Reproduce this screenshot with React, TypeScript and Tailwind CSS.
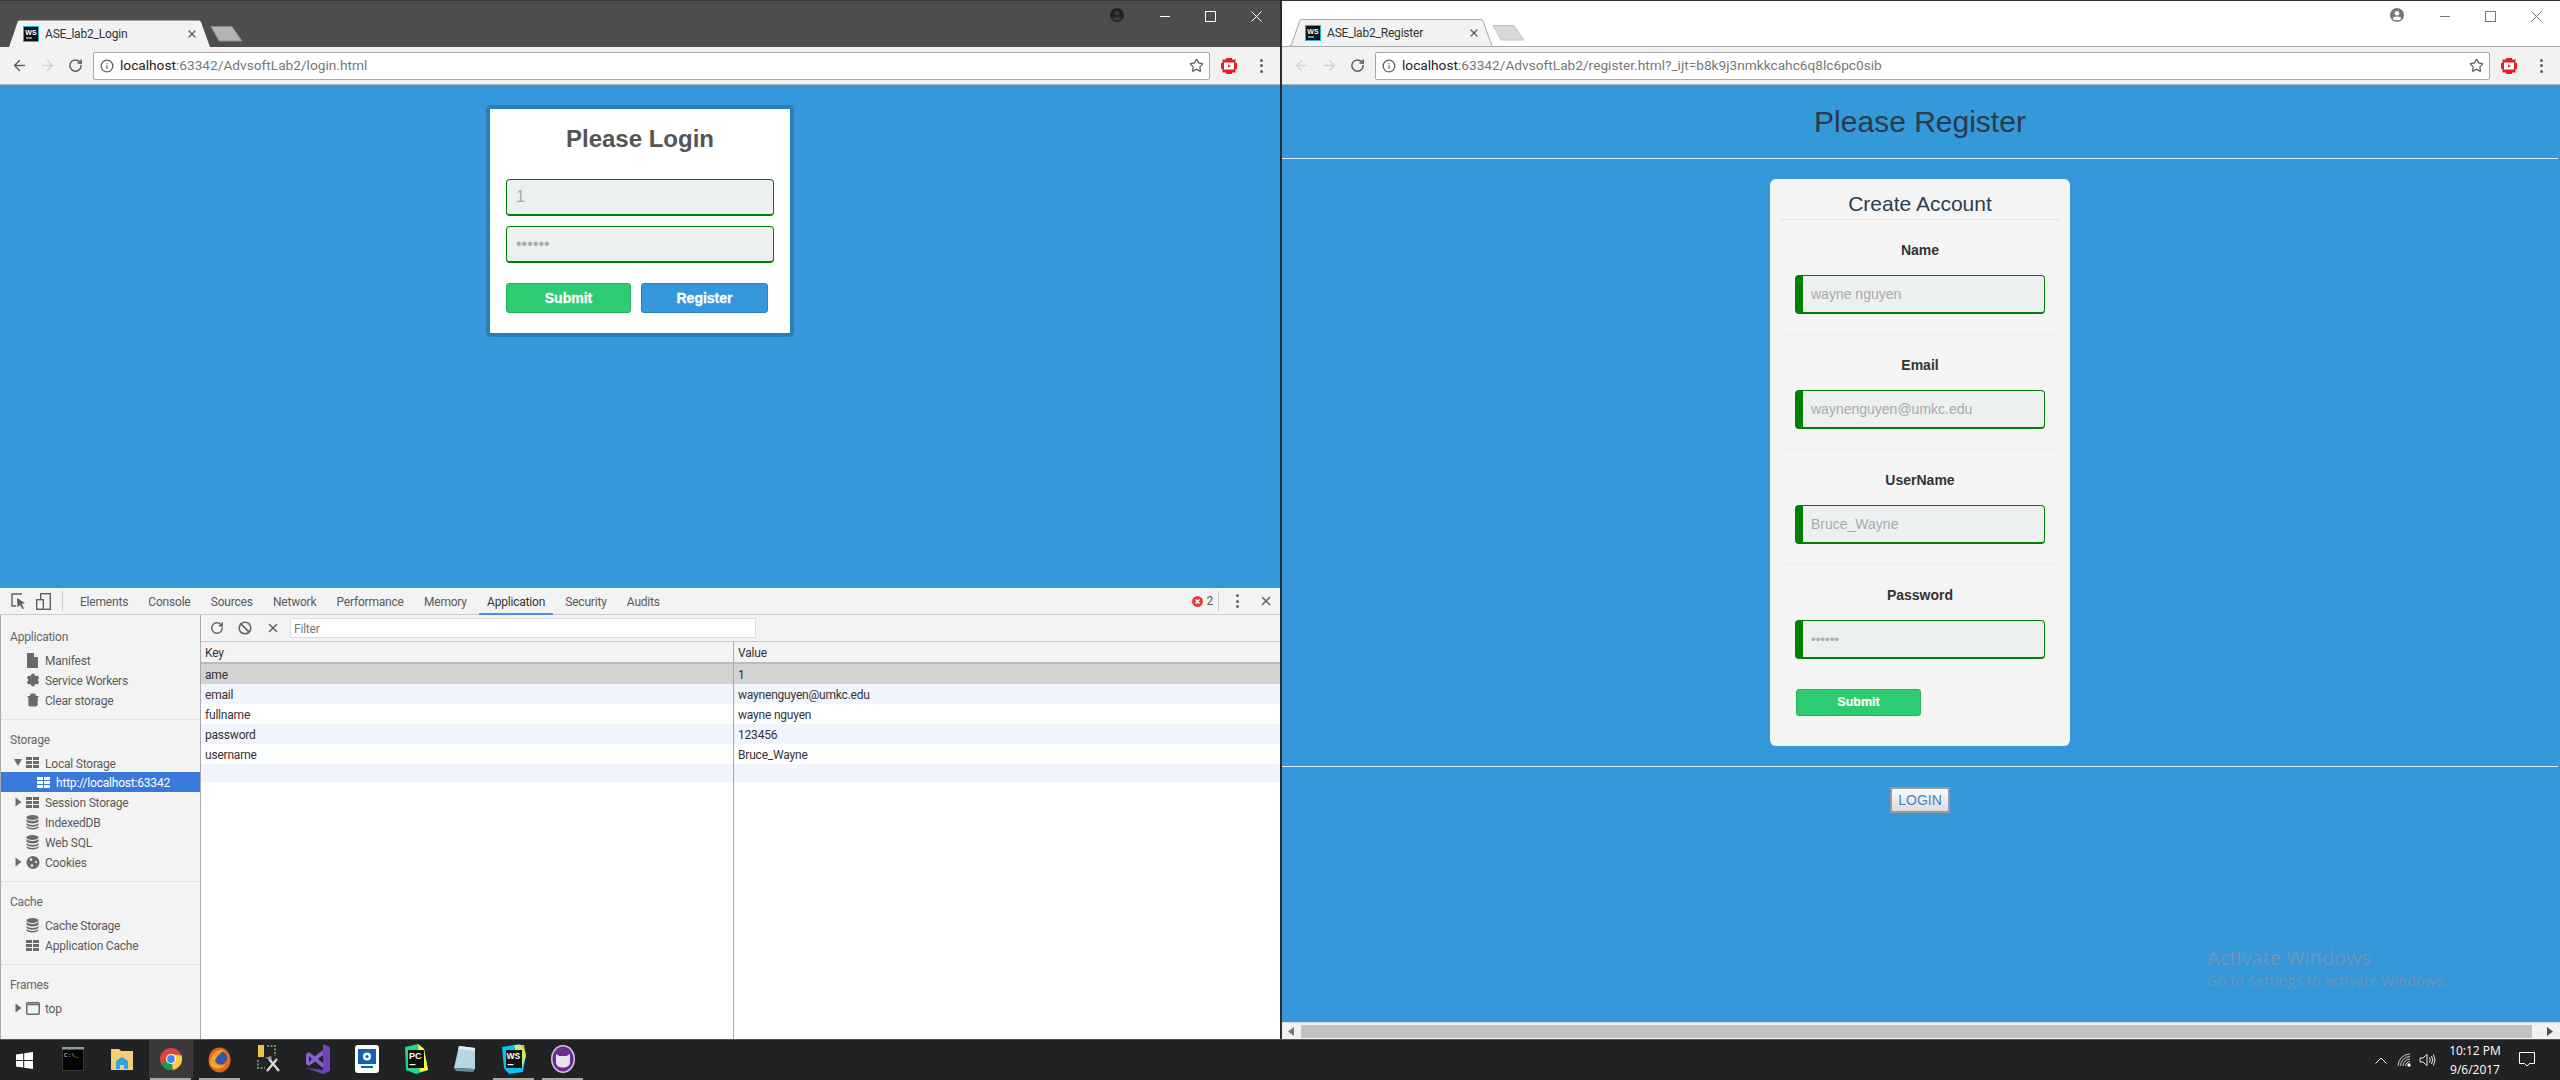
import { ArrowLeft, ArrowRight, Ban, Info, RotateCw, Settings, Star, Trash2, X } from "lucide-react";
import React from "react";

function Favicon() {
  return (
    <svg width="16" height="16" viewBox="0 0 16 16" className="shrink-0">
      <rect x="0.5" y="0.5" width="15" height="15" fill="#111" stroke="#18b5de" />
      <text x="8" y="8.5" textAnchor="middle" fontSize="7" fontWeight="700" fill="#fff" fontFamily="Liberation Sans">WS</text>
      <rect x="3" y="11.5" width="6" height="1" fill="#fff" />
    </svg>
  );
}

function Tab({ title, dark }: { title: string; dark?: boolean }) {
  return (
    <div className="flex items-end pl-[7px]">
      <div className="relative h-[27px] w-[204px]">
        <svg width="204" height="27" className="absolute left-0 top-0">
          <path
            d="M0 27 L2 27 L11 1 Q11.5 0.5 13 0.5 L192 0.5 Q193.5 0.5 194 2 L203 27"
            fill="#f2f2f2"
            stroke={dark ? "none" : "#aaa"}
          />
        </svg>
        <div className="relative flex h-full items-center pl-[16px] pr-[13px]">
          <Favicon />
          <span className="ml-[6px] grow text-[12px] tracking-[-0.2px] text-[#333]">{title}</span>
          <X size={12} strokeWidth={2.4} className="text-[#5a5a5a]" />
        </div>
      </div>
      <svg width="34" height="16" className="mb-[5px] -ml-[1px]">
        <path
          d="M1 0.5 L22 0.5 L32 15 L9 15 Z"
          fill={dark ? "#b4b4b4" : "#d9d9d9"}
          stroke={dark ? "#8a8a8a" : "#c4c4c4"}
        />
      </svg>
    </div>
  );
}

function Avatar({ color }: { color: string }) {
  return (
    <svg width="14" height="14" viewBox="0 0 14 14">
      <circle cx="7" cy="7" r="7" fill={color} />
      <circle cx="7" cy="5.2" r="2.3" fill="#fff" fillOpacity={color === "#777" ? 1 : 0.12} />
      <ellipse cx="7" cy="10.4" rx="4" ry="1.9" fill="#fff" fillOpacity={color === "#777" ? 1 : 0.12} />
    </svg>
  );
}

function WindowButtons({ color }: { color: string }) {
  return (
    <div className="flex h-[30px] items-center">
      <svg width="10" height="10" className="mr-[35px]">
        <path d="M0 5.5 H10" stroke={color} />
      </svg>
      <svg width="11" height="11" className="mr-[35px]">
        <rect x="0.5" y="0.5" width="10" height="10" fill="none" stroke={color} />
      </svg>
      <svg width="11" height="11" className="mr-[18px]">
        <path d="M0.5 0.5 L10.5 10.5 M10.5 0.5 L0.5 10.5" stroke={color} />
      </svg>
    </div>
  );
}

function Extension() {
  return (
    <svg width="16" height="16" viewBox="0 0 16 16">
      <path d="M5 0 H11 V1.5 H14.5 V5 H16 V11 H14.5 V14.5 H11 V16 H5 V14.5 H1.5 V11 H0 V5 H1.5 V1.5 H5 Z" fill="#dc2126" />
      <rect x="3" y="4.5" width="10" height="7" fill="#fff" />
      <path d="M7 6.5 L10 8 L7 9.5 Z" fill="#dc2126" />
    </svg>
  );
}

function Dots({ color = "#5f5f5f" }: { color?: string }) {
  return (
    <div className="flex flex-col gap-[2.5px]">
      <span className="h-[3px] w-[3px] rounded-full" style={{ background: color }} />
      <span className="h-[3px] w-[3px] rounded-full" style={{ background: color }} />
      <span className="h-[3px] w-[3px] rounded-full" style={{ background: color }} />
    </div>
  );
}

function Toolbar({ host, path, backOff }: { host: string; path: string; backOff?: boolean }) {
  return (
    <div className="flex h-[38px] items-center border-b border-[#b5b5b5] bg-[#f2f2f2]">
      <div className="flex w-[93px] items-center pl-[11px]">
        <ArrowLeft size={17} strokeWidth={2} className={backOff ? "text-[#d4d4d4]" : "text-[#5f5f5f]"} />
        <ArrowRight size={17} strokeWidth={2} className="ml-[11px] text-[#d4d4d4]" />
        <RotateCw size={15} strokeWidth={2.4} className="ml-[12px] text-[#5f5f5f]" />
      </div>
      <div className="flex h-[28px] grow items-center rounded-[2px] border border-[#a9a9a9] bg-white pl-[6px] pr-[5px]">
        <Info size={14} strokeWidth={2.2} className="text-[#5f5f5f]" />
        <span className="ml-[6px] grow text-[13.7px] text-[#777]">
          <span className="text-[#222]">{host}</span>
          {path}
        </span>
        <Star size={15} strokeWidth={2} className="text-[#5f5f5f]" />
      </div>
      <div className="ml-[11px] flex w-[59px] items-center">
        <Extension />
        <div className="ml-[23px]">
          <Dots />
        </div>
      </div>
    </div>
  );
}

const inputBase =
  "box-border block rounded-[4px] border border-b-2 border-[#008000] bg-[#ecf0f1] text-[#aaa] outline-none";

function LoginPage() {
  return (
    <div className="flex h-[503px] flex-col items-center bg-[#3498db] pt-[20px]">
      <div className="box-border h-[232px] w-[308px] rounded-[5px] border-4 border-[#2980b9] bg-white px-[16px]">
        <h2 className="mt-[15px] text-center text-[24px] font-bold leading-[30px] text-[#555] font-['Liberation_Sans',sans-serif]">
          Please Login
        </h2>
        <input readOnly value="1" className={`${inputBase} mt-[25px] h-[37px] w-[268px] px-[9px] text-[16px] font-['Liberation_Sans',sans-serif]`} />
        <input readOnly type="password" value="123456" className={`${inputBase} mt-[10px] h-[37px] w-[268px] px-[9px] text-[16px] font-['Liberation_Sans',sans-serif]`} />
        <div className="mt-[20px] flex gap-[10px] font-['Liberation_Sans',sans-serif]">
          <button className="h-[30px] w-[125px] rounded-[3px] border border-[#27ae60] bg-[#2ecc71] text-[14px] font-bold text-white [-webkit-text-stroke:0.3px_white]">
            Submit
          </button>
          <button className="h-[30px] w-[127px] rounded-[3px] border border-[#2980b9] bg-[#3498db] text-[14px] font-bold text-white [-webkit-text-stroke:0.3px_white]">
            Register
          </button>
        </div>
      </div>
    </div>
  );
}

function GridIcon({ color = "#6a6a6a" }: { color?: string }) {
  return (
    <svg width="13" height="11" viewBox="0 0 13 11" className="shrink-0">
      <path d="M0 0 H6 V3 H0 Z M7 0 H13 V3 H7 Z M0 4 H6 V7 H0 Z M7 4 H13 V7 H7 Z M0 8 H6 V11 H0 Z M7 8 H13 V11 H7 Z" fill={color} />
    </svg>
  );
}

function DbIcon() {
  return (
    <svg width="13" height="15" viewBox="0 0 13 15" className="shrink-0">
      <ellipse cx="6.5" cy="2.5" rx="6" ry="2.5" fill="#6a6a6a" />
      <path d="M0.5 4 C2 6.5 11 6.5 12.5 4 V6.5 C11 9 2 9 0.5 6.5 Z M0.5 8 C2 10.5 11 10.5 12.5 8 V9.8 C11 12.3 2 12.3 0.5 9.8 Z M0.5 11 C2 13.5 11 13.5 12.5 11 V12.5 C11 15 2 15 0.5 12.5 Z" fill="#6a6a6a" />
    </svg>
  );
}

function FileIcon() {
  return (
    <svg width="11" height="15" viewBox="0 0 11 15" className="ml-[1px] mr-[1px] shrink-0">
      <path d="M0 0 H6.5 L11 4.5 V15 H0 Z" fill="#6a6a6a" />
      <path d="M7 0.5 V4 H10.5" fill="#f3f3f3" />
    </svg>
  );
}

function CookieIcon() {
  return (
    <svg width="14" height="15" viewBox="0 0 14 15" className="shrink-0">
      <circle cx="7" cy="7.5" r="6.5" fill="#6a6a6a" />
      <circle cx="5" cy="4.5" r="1.2" fill="#f3f3f3" />
      <circle cx="10" cy="7" r="1.1" fill="#f3f3f3" />
      <circle cx="6" cy="10.5" r="1.2" fill="#f3f3f3" />
    </svg>
  );
}

function FrameIcon() {
  return (
    <svg width="14" height="13" viewBox="0 0 14 13" className="shrink-0">
      <rect x="0.75" y="0.75" width="12.5" height="11.5" rx="1" fill="none" stroke="#6a6a6a" strokeWidth="1.5" />
      <path d="M1 2.5 H13" stroke="#6a6a6a" strokeWidth="1.5" />
    </svg>
  );
}

function Caret() {
  return (
    <svg width="7" height="10" viewBox="0 0 7 10" className="shrink-0">
      <path d="M0.5 0.5 L6.5 5 L0.5 9.5 Z" fill="#6a6a6a" />
    </svg>
  );
}

function SideRow({ icon, label, caret }: { icon: React.ReactNode; label: string; caret?: boolean }) {
  return (
    <div className="flex h-[20px] items-center pl-[14px]">
      <div className="w-[11px]">{caret ? <Caret /> : null}</div>
      <div className="flex w-[19px] justify-start">{icon}</div>
      <span className="pt-[2px] text-[12px] text-[#5a5a5a]">{label}</span>
    </div>
  );
}

function SideTitle({ children }: { children: string }) {
  return <div className="mb-[4px] flex h-[20px] items-center pl-[9px] pt-[2px] text-[12px] text-[#666]">{children}</div>;
}

function Sidebar() {
  return (
    <div className="flex w-[201px] shrink-0 flex-col border-l border-r border-[#aaa] bg-[#f3f3f3] pt-[11px]">
      <SideTitle>Application</SideTitle>
      <SideRow icon={<FileIcon />} label="Manifest" />
      <SideRow icon={<Settings size={14} fill="#6a6a6a" strokeWidth={2.2} className="text-[#6a6a6a]" />} label="Service Workers" />
      <SideRow icon={<Trash2 size={14} fill="#6a6a6a" strokeWidth={2} className="text-[#6a6a6a]" />} label="Clear storage" />
      <div className="mb-[9px] mt-[9px] h-px bg-[#e2e2e2]" />
      <SideTitle>Storage</SideTitle>
      <div className="flex h-[19px] items-center pl-[13px]">
        <svg width="8" height="7" viewBox="0 0 8 7" className="mr-[4px]">
          <path d="M0 0 H8 L4 7 Z" fill="#6a6a6a" />
        </svg>
        <div className="w-[19px]">
          <GridIcon />
        </div>
        <span className="pt-[2px] text-[12px] text-[#5a5a5a]">Local Storage</span>
      </div>
      <div className="flex h-[20px] items-center bg-[#3879d9] pl-[36px]">
        <GridIcon color="#fff" />
        <span className="ml-[6px] pt-[2px] text-[12px] text-white">http://localhost:63342</span>
      </div>
      <SideRow icon={<GridIcon />} label="Session Storage" caret />
      <SideRow icon={<DbIcon />} label="IndexedDB" />
      <SideRow icon={<DbIcon />} label="Web SQL" />
      <SideRow icon={<CookieIcon />} label="Cookies" caret />
      <div className="mb-[9px] mt-[9px] h-px bg-[#e2e2e2]" />
      <SideTitle>Cache</SideTitle>
      <SideRow icon={<DbIcon />} label="Cache Storage" />
      <SideRow icon={<GridIcon />} label="Application Cache" />
      <div className="mb-[9px] mt-[9px] h-px bg-[#e2e2e2]" />
      <SideTitle>Frames</SideTitle>
      <SideRow icon={<FrameIcon />} label="top" caret />
    </div>
  );
}

const storageRows = [
  ["ame", "1", "bg-[#d3d3d3]"],
  ["email", "waynenguyen@umkc.edu", "bg-[#f1f5fd]"],
  ["fullname", "wayne nguyen", "bg-white"],
  ["password", "123456", "bg-[#f1f5fd]"],
  ["username", "Bruce_Wayne", "bg-white"],
  ["", "", "bg-[#f1f5fd]"],
];

function StorageTable() {
  return (
    <div className="flex min-w-0 grow flex-col bg-white">
      <div className="flex h-[27px] items-center border-b border-[#ccc] bg-[#f3f3f3] pl-[9px]">
        <RotateCw size={14} strokeWidth={2.6} className="text-[#666]" />
        <Ban size={14} strokeWidth={2.6} className="ml-[14px] text-[#666]" />
        <X size={14} strokeWidth={2.6} className="ml-[14px] text-[#666]" />
        <div className="ml-[10px] flex h-[20px] w-[466px] items-center border border-[#ddd] bg-white pl-[3px] pt-[1px] text-[12px] text-[#777]">
          Filter
        </div>
      </div>
      <div className="flex h-[22px] items-center border-b-2 border-[#bbb] bg-[#f3f3f3] text-[12px] text-[#333]">
        <div className="flex h-full w-[533px] items-center border-r border-[#aaa] pl-[4px] pt-[2px]">Key</div>
        <div className="pl-[4px] pt-[2px]">Value</div>
      </div>
      {storageRows.map(([k, v, bg], i) => (
        <div key={i} className={`flex text-[12px] text-[#333] ${i === 5 ? "h-[18px]" : "h-[20px]"} ${bg}`}>
          <div className="flex h-full w-[533px] items-center border-r border-[#aaa] pl-[4px] pt-[2px]">{k}</div>
          <div className="flex items-center pl-[4px] pt-[2px]">{v}</div>
        </div>
      ))}
      <div className="w-[533px] grow border-r border-[#aaa]" />
    </div>
  );
}

function Devtools() {
  const tabs = ["Elements", "Console", "Sources", "Network", "Performance", "Memory", "Application", "Security", "Audits"];
  return (
    <div className="flex h-[451px] flex-col bg-white tracking-[-0.2px] font-['Roboto',sans-serif]">
      <div className="flex h-[27px] items-center border-b border-[#ccc] bg-[#f3f3f3] pl-[11px]">
        <svg width="15" height="17" viewBox="0 0 15 17" fill="none" className="mr-[10px]">
          <path d="M11 1 H1 V13 H5" stroke="#5f5f5f" strokeWidth="1.4" />
          <path d="M6 5 L14 10 L10.5 11 L13 15.5 L11.5 16 L9 12 L6.5 14.5 Z" fill="#5f5f5f" />
        </svg>
        <svg width="15" height="17" viewBox="0 0 15 17" fill="none">
          <rect x="4.7" y="0.7" width="9.6" height="15.6" stroke="#5f5f5f" strokeWidth="1.4" />
          <rect x="0.7" y="6.7" width="6.6" height="9.6" fill="#f3f3f3" stroke="#5f5f5f" strokeWidth="1.4" />
        </svg>
        <div className="ml-[11px] mr-[17px] h-[20px] w-px bg-[#ccc]" />
        <div className="flex h-full grow gap-[20.2px] pt-[2px] text-[12px] text-[#5a5a5a]">
          {tabs.map((t) => (
            <div
              key={t}
              className={
                t === "Application"
                  ? "-mx-[8px] -mt-[2px] flex h-[27px] items-center border-b-2 border-[#4a8fe8] px-[8px] pt-[2px] text-[#333]"
                  : "flex h-full items-center"
              }
            >
              {t}
            </div>
          ))}
        </div>
        <svg width="11" height="11" viewBox="0 0 11 11">
          <circle cx="5.5" cy="5.5" r="5.5" fill="#e53d3d" />
          <path d="M3.5 3.5 L7.5 7.5 M7.5 3.5 L3.5 7.5" stroke="#fff" strokeWidth="1.3" />
        </svg>
        <span className="ml-[3px] text-[12px] text-[#5a5a5a]">2</span>
        <div className="ml-[5px] mr-[17px] h-[20px] w-px bg-[#ccc]" />
        <Dots color="#666" />
        <X size={14} strokeWidth={2.6} className="ml-[20px] mr-[7px] text-[#666]" />
      </div>
      <div className="flex min-h-0 grow">
        <Sidebar />
        <StorageTable />
      </div>
    </div>
  );
}

function Field({ label, value, password, last }: { label: string; value: string; password?: boolean; last?: boolean }) {
  return (
    <div className={`mx-[10px] px-[15px] pt-[20px] ${last ? "" : "border-b border-[#eee] pb-[20px]"}`}>
      <div className="text-center text-[14px] font-bold leading-[20px] text-[#333]">{label}</div>
      <input
        readOnly
        type={password ? "password" : "text"}
        value={value}
        className={`${inputBase} mt-[15px] h-[39px] w-[250px] border-l-8 pl-[8px] ${password ? "text-[13.33px]" : "text-[14px]"} font-['Liberation_Sans',sans-serif]`}
      />
    </div>
  );
}

function RegisterPage() {
  return (
    <div className="relative flex grow flex-col bg-[#3498db] pr-[2px] font-['Liberation_Sans',sans-serif]">
      <div className="flex h-[74px] items-center justify-center border-b border-[#dbe9f4] text-[30px] text-[#2b3a48]">
        Please Register
      </div>
      <div className="mt-[20px] flex flex-col items-center">
        <div className="h-[567px] w-[300px] rounded-[6px] bg-[#f5f5f5]">
          <div className="mx-[10px] flex h-[41px] items-center justify-center border-b border-[#e5e5e5] pt-[9px] text-[21px] text-[#2c3e50]">
            Create Account
          </div>
          <Field label="Name" value="wayne nguyen" />
          <Field label="Email" value="waynenguyen@umkc.edu" />
          <Field label="UserName" value="Bruce_Wayne" />
          <Field label="Password" value="123456" password last />
          <button className="ml-[26px] mt-[30px] h-[27px] w-[125px] rounded-[3px] border border-[#27ae60] bg-[#2ecc71] text-[12.5px] font-bold text-white [-webkit-text-stroke:0.2px_white]">
            Submit
          </button>
        </div>
      </div>
      <div className="mt-[20px] h-px bg-[#dbe9f4]" />
      <div className="mt-[20px] flex justify-center">
        <button className="h-[26px] w-[60px] border-2 border-[#999] bg-linear-to-b from-[#fafafa] to-[#dcdcdc] text-[14px] text-[#3a86c8]">
          LOGIN
        </button>
      </div>
      <div className="absolute left-[925px] top-[860px] font-['Open_Sans',sans-serif] text-[#6d96b8]">
        <div className="text-[20px] leading-[26px]">Activate Windows</div>
        <div className="text-[14px] leading-[20px] tracking-[0.3px]">Go to Settings to activate Windows.</div>
      </div>
    </div>
  );
}

function ScrollBar() {
  return (
    <div className="flex h-[17px] items-center border-t border-[#ddd] bg-[#f1f1f1] px-[6px]">
      <svg width="6" height="9">
        <path d="M6 0 L0 4.5 L6 9 Z" fill="#777" />
      </svg>
      <div className="ml-[7px] h-[13px] w-[1231px] bg-[#c1c1c1]" />
      <svg width="6" height="9" className="ml-auto mr-[1px]">
        <path d="M0 0 L6 4.5 L0 9 Z" fill="#505050" />
      </svg>
    </div>
  );
}

function TaskIcon({ children, active, open }: { children: React.ReactNode; active?: boolean; open?: boolean }) {
  return (
    <div className="flex h-full w-[49px] shrink-0 flex-col items-center">
      <div className={`flex w-[44px] grow items-center justify-center ${active ? "bg-[#3a3a3a]" : ""}`}>{children}</div>
      <div className={`h-[2px] w-[41px] ${open ? "bg-[#a8a8a8]" : ""}`} />
    </div>
  );
}

function Taskbar() {
  return (
    <div className="flex h-[41px] items-stretch border-t border-[#555] bg-[#212224]">
      <div className="flex w-[48px] shrink-0 items-center justify-center">
        <svg width="17" height="17" viewBox="0 0 17 17">
          <path d="M0 2.4 L7.2 1.4 V8 H0 Z M8.2 1.2 L17 0 V8 H8.2 Z M0 9 H7.2 V15.6 L0 14.6 Z M8.2 9 H17 V17 L8.2 15.8 Z" fill="#fff" />
        </svg>
      </div>
      <TaskIcon>
        <svg width="22" height="24" viewBox="0 0 22 24">
          <rect width="22" height="24" fill="#050505" stroke="#666" />
          <rect width="22" height="2.5" fill="#999" />
          <text x="2" y="10" fontSize="6" fill="#ddd" fontFamily="Liberation Mono">C:\_</text>
        </svg>
      </TaskIcon>
      <TaskIcon>
        <svg width="22" height="22" viewBox="0 0 22 22">
          <path d="M0 1 H8 L10 3 H22 V22 H0 Z" fill="#f4cf70" />
          <path d="M5 21 V13 L11 9 L17 13 V21 H13 V17 H9 V21 Z" fill="#2fa3e6" />
        </svg>
      </TaskIcon>
      <TaskIcon active open>
        <svg width="22" height="26" viewBox="0 0 22 22">
          <circle cx="11" cy="11" r="11" fill="#db4437" />
          <path d="M11 11 L1.5 16.5 A11 11 0 0 0 13 21.8 Z" fill="#0f9d58" />
          <path d="M11 11 L13 21.8 A11 11 0 0 0 21.5 7.5 L11 6 Z" fill="#ffcd40" />
          <circle cx="11" cy="11" r="5" fill="#fff" />
          <circle cx="11" cy="11" r="3.9" fill="#4285f4" />
        </svg>
      </TaskIcon>
      <TaskIcon open>
        <svg width="23" height="27" viewBox="0 0 23 27">
          <ellipse cx="11.5" cy="14" rx="11" ry="12.5" fill="#e8651f" />
          <circle cx="12.5" cy="12" r="6.5" fill="#3257a8" />
          <path d="M2 18 C6 24 14 24 18 18 C14 20 9 20 7 15 C9 9 13 7 16 4 C10 3 3 7 2 18 Z" fill="#f5a623" />
        </svg>
      </TaskIcon>
      <TaskIcon>
        <svg width="24" height="30" viewBox="0 0 24 30">
          <rect x="1" y="1" width="6" height="12" fill="#e9c44c" />
          <path d="M10 2 H18 V12 M1 16 V24 H8" fill="none" stroke="#7cb66c" strokeWidth="1.5" strokeDasharray="2 1.5" />
          <path d="M10 27 L20 15 M22 27 L12 15" stroke="#ddd" strokeWidth="2.2" />
          <path d="M8 14 L14 12 L15 16 Z" fill="#999" />
        </svg>
      </TaskIcon>
      <TaskIcon>
        <svg width="24" height="30" viewBox="0 0 24 30">
          <path d="M17 0 L24 3 V27 L17 30 L0 24 L17 26 Z" fill="#6d44ba" />
          <path d="M0 10 L3 8 L17 19 V24 L9 17.5 L3 22 L0 20 Z M17 6 V11 L9 17 L6 14.5 Z M3 12 V18 L6 15 Z" fill="#8a5fd0" />
        </svg>
      </TaskIcon>
      <TaskIcon>
        <svg width="24" height="30" viewBox="0 0 24 30">
          <rect y="1" width="24" height="28" rx="3" fill="#fff" />
          <rect x="3" y="5" width="18" height="15" fill="#0f62b8" />
          <rect x="6" y="22" width="12" height="2" fill="#0f62b8" />
          <circle cx="12" cy="12.5" r="4" fill="#fff" />
          <circle cx="12" cy="12.5" r="1.6" fill="#0f62b8" />
        </svg>
      </TaskIcon>
      <TaskIcon>
        <svg width="24" height="30" viewBox="0 0 24 30">
          <path d="M1 3 L14 0 L20 5 L24 26 L12 30 L2 26 Z" fill="#21d789" />
          <path d="M14 0 L20 5 L24 26 L16 28 Z" fill="#fcf84a" />
          <rect x="4" y="6" width="16" height="18" fill="#111" />
          <text x="5" y="15" fontSize="9" fontWeight="700" fill="#fff" fontFamily="Liberation Sans">PC</text>
          <rect x="5.5" y="20" width="6" height="1.2" fill="#fff" />
        </svg>
      </TaskIcon>
      <TaskIcon>
        <svg width="24" height="28" viewBox="0 0 24 28">
          <path d="M6 1 L22 3 L22 24 L1 23 Z" fill="#b4d7e3" />
          <path d="M6 1 L22 3 L22 6 L5 4 Z" fill="#dfeff5" />
          <path d="M1 23 L22 24 L20 27 L3 26 Z" fill="#6d8892" />
        </svg>
      </TaskIcon>
      <TaskIcon open>
        <svg width="24" height="30" viewBox="0 0 24 30">
          <path d="M0 3 L18 0 L24 10 L21 28 L7 30 L2 24 Z" fill="#07c3f2" />
          <path d="M12 1 L22 1 L24 12 L20 24 Z" fill="#fcf84a" opacity="0.8" />
          <rect x="4" y="6" width="16" height="18" fill="#111" />
          <text x="4.6" y="14.5" fontSize="8.5" fontWeight="700" fill="#fff" fontFamily="Liberation Sans">WS</text>
          <rect x="5.5" y="20" width="6" height="1.2" fill="#fff" />
        </svg>
      </TaskIcon>
      <TaskIcon open>
        <svg width="24" height="28" viewBox="0 0 24 28">
          <ellipse cx="12" cy="14" rx="12" ry="14" fill="#d5c7de" />
          <ellipse cx="12" cy="14" rx="10.5" ry="12.5" fill="#6a2c91" />
          <path d="M5 9 L8.5 11 H15.5 L19 9 V17 C19 21 16 22.5 12 22.5 C8 22.5 5 21 5 17 Z" fill="#e8e2ee" />
        </svg>
      </TaskIcon>
      <div className="grow" />
      <div className="flex items-center text-white">
        <svg width="12" height="7" viewBox="0 0 12 7" fill="none" className="mr-[10px]">
          <path d="M0.5 6.5 L6 1 L11.5 6.5" stroke="#fff" />
        </svg>
        <svg width="14" height="14" viewBox="0 0 14 14" fill="none" className="mr-[8px]">
          <path d="M1 13 A12 12 0 0 1 13 1 M3.5 13 A9.5 9.5 0 0 1 13 3.5 M6 13 A7 7 0 0 1 13 6 M8.5 13 A4.5 4.5 0 0 1 13 8.5" stroke="#ddd" strokeWidth="0.9" />
          <rect x="10.5" y="10.5" width="3" height="3" fill="#fff" />
        </svg>
        <svg width="17" height="14" viewBox="0 0 17 14" fill="none" className="mr-[13px]">
          <path d="M1 5 H4 L8 1.5 V12.5 L4 9 H1 Z M10.5 4.5 Q12 7 10.5 9.5 M12.5 3 Q15 7 12.5 11 M14.5 1.5 Q17.5 7 14.5 12.5" stroke="#fff" strokeWidth="0.9" />
        </svg>
        <div className="flex w-[52px] flex-col items-center font-['Open_Sans',sans-serif] text-[12px] leading-[19px]">
          <span className="whitespace-nowrap">10:12 PM</span>
          <span>9/6/2017</span>
        </div>
        <svg width="16" height="15" viewBox="0 0 16 15" fill="none" className="ml-[18px] mr-[25px] mb-[2px]">
          <path d="M0.5 0.5 H15.5 V11.5 H10.5 L8 14 L5.5 11.5 H0.5 Z" stroke="#fff" />
        </svg>
      </div>
    </div>
  );
}

export default function App() {
  return (
    <div className="flex h-[1080px] w-[2560px] flex-col overflow-hidden bg-[#2b2b2b] font-['Roboto',sans-serif]">
      <div className="flex h-[1039px]">
        <div className="flex w-[1280px] shrink-0 flex-col">
          <div className="flex h-[47px] justify-between border-t border-[#3a3a3a] bg-[#4d4d4d]">
            <Tab title="ASE_lab2_Login" dark />
            <div className="flex items-start">
              <div className="mr-[36px] mt-[7px]">
                <Avatar color="#222" />
              </div>
              <WindowButtons color="#fff" />
            </div>
          </div>
          <Toolbar host="localhost" path=":63342/AdvsoftLab2/login.html" />
          <LoginPage />
          <Devtools />
        </div>
        <div className="w-[2px] shrink-0 bg-[#2b2b2b]" />
        <div className="flex min-w-0 grow flex-col">
          <div className="flex h-[47px] justify-between border-b border-t border-b-[#aaa] border-t-[#333] bg-white">
            <Tab title="ASE_lab2_Register" />
            <div className="flex items-start">
              <div className="mr-[36px] mt-[7px]">
                <Avatar color="#777" />
              </div>
              <WindowButtons color="#777" />
            </div>
          </div>
          <Toolbar host="localhost" path=":63342/AdvsoftLab2/register.html?_ijt=b8k9j3nmkkcahc6q8lc6pc0sib" backOff />
          <RegisterPage />
          <ScrollBar />
        </div>
      </div>
      <Taskbar />
    </div>
  );
}
